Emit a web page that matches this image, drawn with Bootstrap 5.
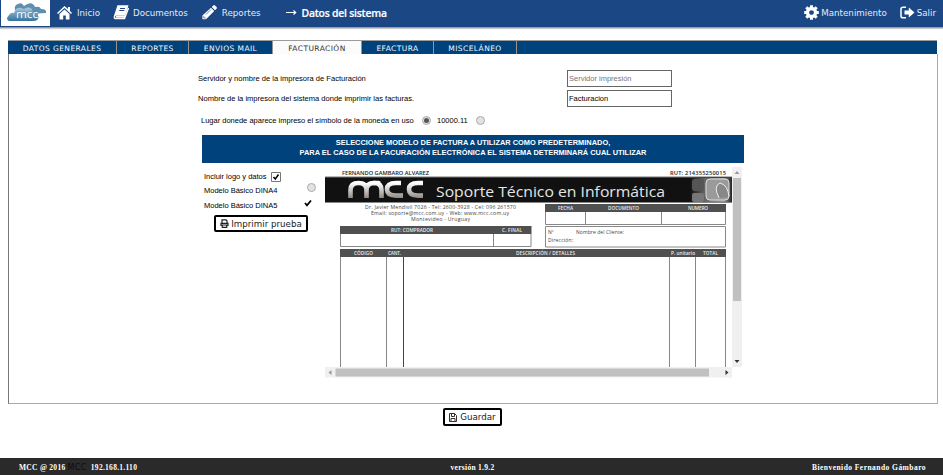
<!DOCTYPE html>
<html lang="es">
<head>
<meta charset="utf-8">
<meta name="viewport" content="width=device-width, initial-scale=1">
<title>Datos del sistema</title>
<link href="https://cdn.jsdelivr.net/npm/bootstrap@5.3.0/dist/css/bootstrap.min.css" rel="stylesheet">
<style>
body{font:7.5px/10px "Liberation Sans",Arial,sans-serif;color:#000;background:#fff;height:475px;overflow:hidden}
.topbar{height:28px;background:#1b4785;border-bottom:1px solid #8f9baf;box-shadow:0 1px 1px #ccc;padding-left:1px;font:8.7px/12px "DejaVu Sans",Verdana,sans-serif}
.topbar a{color:#e4ebf5;text-decoration:none;display:flex;height:25px;align-items:center}
.topbar svg{flex:none}
.logo{width:49px;height:26px;background:#fff}
.home{margin-left:7px}.home span{margin-left:5px}
.doc{margin-left:13px}.doc span{margin-left:3px}
.rep{margin-left:14px}.rep span{margin-left:5px}
.man{margin-left:2px}.out{margin:0 7px 0 13px}.out span{margin-left:2px}
.page-title{font:600 10.4px/14px "Open Sans",sans-serif;color:#fff;height:25px;margin-left:25px}
.page-title span{margin-left:5px;letter-spacing:-.22px;-webkit-text-stroke:.2px #fff}
.tabs{height:14px;margin:12px 6px 0 8px;background:#00427c;border-top:1px solid #9b9b9b;font:7.5px/13px "DejaVu Sans",Verdana,sans-serif;letter-spacing:.42px}
.tabs a{color:#f4f7fb;text-decoration:none;text-align:center;border-right:1.5px solid #9b938b;height:13px;white-space:nowrap;padding-top:1px}
.tabs a.active{background:#fbfbfb;color:#333}
.t1{width:109px}.t2{width:72px}.t3{width:84px}.t4{width:89px}.t5{width:72px}.t6{width:83px}
.panel{margin:0 5px 0 8px;height:350px;border:1px solid #aaa;border-top:0;border-left-color:#777;padding:16px 0 0 189px}
.line{height:20px}
.line label{width:369px;white-space:nowrap;padding-top:4px;font-size:7.55px}
.field{width:105px;height:17px;border:1px solid #666;border-radius:0;padding:0 0 0 1px;font-size:7.5px;line-height:15px;color:#000;background:#fff}
.field::placeholder{color:#777;opacity:1}
.dot{width:9px;height:9px;border:1px solid #aaa;border-radius:50%;background:#e2e2e2;display:inline-flex;align-items:center;justify-content:center}
.dot.on::after{content:"";width:5px;height:5px;border-radius:50%;background:#555}
.currency{padding:1px 0 0 3px}
.lug{width:221px}.num{margin:0 8px 0 6px}
.banner{width:542px;height:28px;background:#00427c;color:#fff;font-weight:700;margin:5px 0 0 4px;padding-top:3px;font-size:7.42px;line-height:10px}
.opts{width:123px;padding:9px 0 0 2px}
.opt{padding-top:4px;width:112px}.opt .dot{margin-top:-3px}
.o2{padding-top:5px;width:108px}.o2 svg{margin-top:-2px}
.preview{margin:3px 0 0 -1px;flex:none}
.act{border:2px solid #000;border-radius:2px;background:#fff;color:#222;font:8.7px/12px "DejaVu Sans",sans-serif;padding:0;display:flex;align-items:center;justify-content:center;gap:2px;white-space:nowrap}
.print{width:94px;height:17px;margin:4px 0 0 10px}
.save{width:59px;height:18px;margin:4px 0 0 443px;gap:3px;font-size:8.7px}
.foot{height:17px;background:#2a2a2a;color:#fff;font:700 7.5px/17px "Liberation Serif",serif;letter-spacing:.28px;padding:1px 17px 0 19px}
.foot>span{flex:1 1 0}
.foot .ver{flex:0 0 auto}
.foot .dim{font:8px "DejaVu Sans",sans-serif;color:#0d0d0d}
.foot .who{letter-spacing:.46px}
</style>
</head>
<body class="d-flex flex-column">
<header class="topbar d-flex flex-shrink-0">
 <div class="logo"><svg width="49" height="26" viewBox="0 0 49 26"><defs><linearGradient id="sky" x2="0" y2="1"><stop stop-color="#a9c8dc"/><stop offset="1" stop-color="#33739f"/></linearGradient></defs><path d="M14 10q-1-5 3-6q4-2 6 2q8-6 11 1q5-1 6 2q6 0 5 4l-16 1V9z" fill="#5f8fb0"/><path d="M8 21q-4-2 0-6q2-3 5-2q2-8 10-4q7-4 9 3q6 0 5 5q1 4-5 4z" fill="url(#sky)"/><text x="15" y="18" font-family="Open Sans" font-size="10" textLength="22" lengthAdjust="spacingAndGlyphs" fill="#fff" stroke="#5b8fb3" stroke-width="1.200" paint-order="stroke">mcc</text></svg></div>
 <a href="#" class="home"><svg width="15" height="14" viewBox="0 0 15 14" fill="#fff"><path d="M7.500 0 0 7l1 1 6.500-6L14 8l1-1-2-2V1h-2v2zM7.500 3.500 2.500 8v5.500h3.700V9.500h2.600v4h3.700V8z"/></svg><span>Inicio</span></a>
 <a href="#" class="doc"><svg width="17" height="15" viewBox="0 0 17 15" fill="none" stroke="#fff" stroke-width="1.500"><path d="M5 1h9.500L11.500 10H2z" fill="#fff"/><path d="M2 10q-1.500 3.500.5 3.500h9L15.500 3M3 11.700h8.500"/><path d="M7 3.500h5M6.300 5.500h5" stroke="#1b4785" stroke-width="1"/></svg><span>Documentos</span></a>
 <a href="#" class="rep"><svg width="15" height="15" viewBox="0 0 15 15" fill="#fff"><path d="M9 3 12 6 4 14H.700v-3.500zM10 2l1.300-1.300q.9-.8 1.800 0l1.200 1.300q.8.900 0 1.700L13 5z" stroke="#fff" stroke-width=".5"/><path d="m4 9.500 5-5M1.800 11v2h2" stroke="#1b4785" stroke-width=".6" fill="none"/></svg><span>Reportes</span></a>
 <div class="page-title d-flex align-items-center"><svg width="11" height="7" viewBox="0 0 11 7" fill="none" stroke="#fff" stroke-width="1.200"><path d="M0 3.500h9.500M7.500 1.500l2.200 2-2.200 2"/></svg><span>Datos del sistema</span></div>
 <a href="#" class="ms-auto"><svg width="15" height="15" viewBox="-7.500 -7.500 15 15" ><circle r="4" fill="none" stroke="#fff" stroke-width="3.300"/><g stroke="#fff" stroke-width="3"><path d="M0-7.300v2.500M0 7.300v-2.500M-7.300 0h2.500M7.300 0h-2.500M-5.200-5.200l1.800 1.800M5.200 5.200 3.400 3.400M-5.200 5.200l1.800-1.800M5.200-5.200 3.400-3.400"/></g></svg><span class="man">Mantenimiento</span></a>
 <a href="#" class="out"><svg width="15" height="13" viewBox="0 0 15 13"><path d="M6 1.200H3Q1 1.200 1 3v7q0 1.800 2 1.800h3" fill="none" stroke="#fff" stroke-width="1.500"/><path d="M4.500 4.500h4.300V1.500L14.500 6.500 8.800 11.500v-3H4.500z" fill="#fff"/></svg><span>Salir</span></a>
</header>
<nav class="tabs d-flex flex-shrink-0">
 <a href="#" class="t1">DATOS GENERALES</a><a href="#" class="t2">REPORTES</a><a href="#" class="t3">ENVIOS MAIL</a><a href="#" class="t4 active">FACTURACIÓN</a><a href="#" class="t5">EFACTURA</a><a href="#" class="t6">MISCELÁNEO</a>
</nav>
<main class="panel flex-shrink-0">
 <div class="line d-flex"><label>Servidor y nombre de la impresora de Facturación</label><input class="field" placeholder="Servidor impresión"></div>
 <div class="line d-flex"><label>Nombre de la impresora del sistema donde imprimir las facturas.</label><input class="field" value="Facturacion"></div>
 <div class="line currency d-flex align-items-center"><span class="lug">Lugar donede aparece impreso el símbolo de la moneda en uso</span><i class="dot on"></i><span class="num">10000.11</span><i class="dot"></i></div>
 <div class="banner text-center">SELECCIONE MODELO DE FACTURA A UTILIZAR COMO PREDETERMINADO,<br>PARA EL CASO DE LA FACURACIÓN ELECTRÓNICA EL SISTEMA DETERMINARÁ CUAL UTILIZAR</div>
 <div class="d-flex ps-1">
  <div class="opts flex-shrink-0">
   <div class="d-flex align-items-center gap-1">Incluir logo y datos <svg width="10" height="10" viewBox="0 0 10 10"><path d="M.5.500h9v9h-9z" fill="#fff" stroke="#777"/><path d="m2.500 5 1.800 2L7.500 2.500" fill="none" stroke="#000" stroke-width="1.500"/></svg></div>
   <div class="opt d-flex justify-content-between"><span>Modelo Básico DINA4</span><i class="dot"></i></div>
   <div class="opt o2 d-flex justify-content-between"><span>Modelo Básico DINA5</span><svg width="8" height="8" viewBox="0 0 8 8"><path d="m1 4 2 2.300L7 1.500" fill="none" stroke="#000" stroke-width="1.800"/></svg></div>
   <button class="act print"><svg width="9" height="9" viewBox="0 0 9 9"><path d="M2 4V.800h4l1 1V4M1 7V4.300h7V7M2.300 6h4.400v2.300H2.300z" fill="none" stroke="#222" stroke-width="1.200"/></svg>Imprimir prueba</button>
  </div>
  <svg class="preview" width="420" height="212" viewBox="324 166 420 212">
   <defs><linearGradient id="silver" x2="0" y2="1"><stop stop-color="#fff"/><stop offset="1" stop-color="#8f8a83"/></linearGradient><linearGradient id="tile"><stop stop-color="#111"/><stop offset=".35" stop-color="#666"/><stop offset=".8" stop-color="#999"/><stop offset="1" stop-color="#222"/></linearGradient></defs>
   <g font-family="Open Sans" font-size="5.700" font-weight="600" fill="#222"><text x="342" y="175" textLength="87" lengthAdjust="spacingAndGlyphs">FERNANDO GAMBARO ALVAREZ</text><text x="670" y="175" textLength="56">RUT: 214355250015</text></g>
   <path d="M325 177h407v25.500H325z" fill="#111"/><path d="M325 176.500h407v1H325z" fill="#777"/>
   <path d="M690 178h42v24h-42z" fill="url(#tile)"/><rect x="692" y="179" width="12" height="12" rx="3" fill="#555"/><rect x="692" y="193" width="12" height="9" rx="2" fill="#777"/><rect x="706" y="179" width="23" height="21" rx="4" fill="#9a9a9a" stroke="#ddd"/><path d="M719 198q-6-12 1-15 8 2 9 14" fill="#888" stroke="#eee"/>
   <g fill="none" stroke="url(#silver)" stroke-width="4.600"><path d="M350.500 198v-8q0-7 8-7t8 7v8M366.500 190q0-7 8-7t0 0M366.500 190q0-7 7.500-7t7.500 7v8M401 183h-5q-9 0-9 6.300t9 6.300h7M423 183h-5q-9 0-9 6.300t9 6.300h5"/></g>
   <text x="436" y="197" font-family="Open Sans" font-size="14.500" fill="#e5e5e5" textLength="229" lengthAdjust="spacingAndGlyphs">Soporte Técnico en Informática</text>
   <g font-family="Open Sans" font-size="5.200" fill="#444"><text x="365" y="208.700" textLength="151">Dr. Javier Mendivil 7026 - Tel: 2600-3928 - Cel: 096 261570</text><text x="371" y="215" textLength="138">Email: soporte@mcc.com.uy - Web: www.mcc.com.uy</text><text x="411" y="221.300" textLength="59">Montevideo - Uruguay</text></g>
   <g fill="#505050"><path d="M340 226h191.500v8H340zM545 204h181v8H545zM340 249h386v8H340z"/></g>
   <g fill="none" stroke="#888"><path d="M340.500 234v12.500h190.500V234M493.500 234v12.500M545.500 212v12.500h180V212M585.500 212v12M661.500 212v12M545.500 226.500h180v20.500h-180z"/><path d="M340.500 257v110M386.500 257v110M669.500 257v110M695.500 257v110M725.500 257v110"/><path d="M403.500 257v110" stroke="#444"/></g>
   <g font-family="Open Sans" font-size="4.700" font-weight="600" fill="#eee"><text x="391" y="232" textLength="42">RUT: COMPRADOR</text><text x="502" y="232" textLength="20">C. FINAL</text><text x="558" y="210" textLength="15">FECHA</text><text x="608" y="210" textLength="31">DOCUMENTO</text><text x="688" y="210" textLength="20">NUMERO</text><text x="354" y="255" textLength="19">CÓDIGO</text><text x="388" y="255" textLength="13">CANT.</text><text x="516" y="255" textLength="59">DESCRIPCIÓN / DETALLES</text><text x="671" y="255" textLength="24">P. unitario</text><text x="703" y="255" textLength="15">TOTAL</text></g>
   <g font-family="Open Sans" font-size="5" fill="#444"><text x="548" y="234" >Nº</text><text x="576" y="234" textLength="48">Nombre del Cliente:</text><text x="548" y="242" textLength="25">Dirección:</text></g>
   <path d="M732 167h10v200h-10zM325 367h407v10.500H325z" fill="#f0f0f0"/><path d="M733 178h8v123h-8zM335.500 368.500h373.500v8H335.500z" fill="#c0c0c0"/>
   <path d="m734.500 174 2.500-3 2.500 3zM331.500 370v5l-3-2.500z" fill="#999"/><path d="m734.500 360 2.500 3 2.500-3zM725.500 370v5l3-2.500z" fill="#333"/>
  </svg>
 </div>
</main>
<button class="act save flex-shrink-0"><svg width="8" height="9" viewBox="0 0 8 9" fill="none" stroke="#333"><path d="M.5.500h5l2 2v6h-7zM2.500.500v3h3v-3M2 8.500v-3h4v3"/></svg>Guardar</button>
<footer class="foot mt-auto d-flex flex-shrink-0"><span>MCC @ 2016 <span class="dim">MCC</span>&nbsp; 192.168.1.110</span><span class="ver">versión 1.9.2</span><span class="who text-end">Bienvenido Fernando Gámbaro</span></footer>
<script src="https://cdn.jsdelivr.net/npm/bootstrap@5.3.0/dist/js/bootstrap.bundle.min.js"></script>
</body>
</html>
